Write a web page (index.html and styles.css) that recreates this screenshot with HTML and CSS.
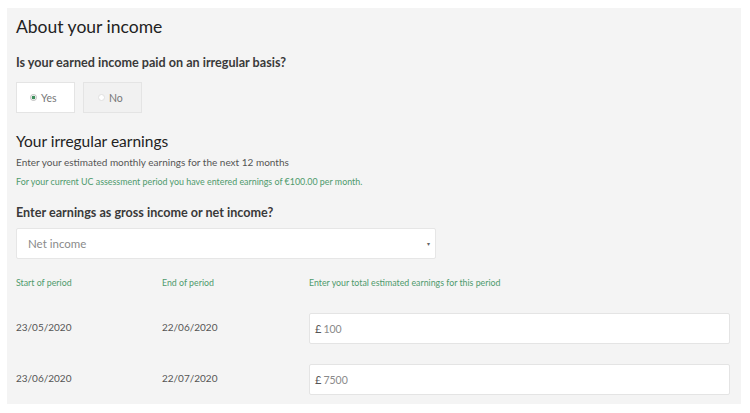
FILE: index.html
```html
<!DOCTYPE html>
<html lang="en">
<head>
    <meta charset="UTF-8">
    <meta name="viewport" content="width=device-width, initial-scale=1.0">
    <title>About your income</title>
    <link rel="stylesheet" href="styles.css">
</head>
<body>
    <div class="panel">
        <h1>About your income</h1>

        <p class="question">Is your earned income paid on an irregular basis?</p>
        <div class="choices">
            <label class="choice selected"><span class="dot on"></span>Yes</label>
            <label class="choice"><span class="dot"></span>No</label>
        </div>

        <h2>Your irregular earnings</h2>
        <p class="intro">Enter your estimated monthly earnings for the next 12 months</p>
        <p class="note">For your current UC assessment period you have entered earnings of €100.00 per month.</p>

        <p class="question q2">Enter earnings as gross income or net income?</p>
        <div class="select">
            <span>Net income</span>
            <span class="arrow">▾</span>
        </div>

        <div class="row head">
            <div>Start of period</div>
            <div>End of period</div>
            <div>Enter your total estimated earnings for this period</div>
        </div>

        <div class="row period first">
            <div class="date">23/05/2020</div>
            <div class="date">22/06/2020</div>
            <div class="amount"><span class="pound">£</span>100</div>
        </div>

        <div class="row period">
            <div class="date">23/06/2020</div>
            <div class="date">22/07/2020</div>
            <div class="amount"><span class="pound">£</span>7500</div>
        </div>
    </div>
</body>
</html>
```

FILE: styles.css
```css
body {
    margin: 0;
    padding: 8px 9px 9px 7px;
    background-color: #ffffff;
    font-family: Lato, "Open Sans", sans-serif;
    color: #333333;
}
.panel {
    background-color: #f4f4f4;
    padding: 8px 12px 9px 9px;
    height: 396px;
    box-sizing: border-box;
}
h1 {
    margin: 0;
    font-size: 17.5px;
    font-weight: 400;
    line-height: 22px;
    color: #222222;
}
h2 {
    margin: 18px 0 0 0;
    font-size: 15.5px;
    font-weight: 400;
    line-height: 20px;
    color: #222222;
}
.question {
    margin: 18px 0 0 0;
    font-size: 12.6px;
    font-weight: 700;
    line-height: 14px;
    color: #3a3a3a;
}
.q2 {
    margin-top: 19px;
}
.choices {
    display: flex;
    gap: 8px;
    margin-top: 12px;
}
.choice {
    display: flex;
    align-items: center;
    gap: 4px;
    box-sizing: border-box;
    height: 31px;
    width: 59px;
    padding-left: 14px;
    border: 1px solid #e4e4e4;
    background-color: #f1f1f1;
    font-size: 10.5px;
    color: #777777;
}
.choice.selected {
    background-color: #ffffff;
    padding-left: 13px;
}
.dot {
    width: 7px;
    height: 7px;
    border-radius: 50%;
    border: 1px solid #e0e0e0;
    background-color: #ffffff;
    box-sizing: border-box;
}
.dot.on {
    border-color: #bcbcbc;
    background: radial-gradient(circle, #3f8f5c 0 1.6px, #ffffff 2.1px);
}
.intro {
    margin: 5px 0 0 0;
    font-size: 10px;
    line-height: 12px;
    color: #555555;
}
.note {
    margin: 9px 0 0 0;
    font-size: 8.9px;
    line-height: 10px;
    color: #4e9a6c;
}
.select {
    display: flex;
    align-items: center;
    justify-content: space-between;
    box-sizing: border-box;
    width: 420px;
    height: 31px;
    margin-top: 8px;
    padding: 0 5px 0 11px;
    background-color: #ffffff;
    border: 1px solid #e6e6e6;
    border-radius: 2px;
    font-size: 11.5px;
    color: #8a8a8a;
}
.select .arrow {
    font-size: 6px;
    color: #666666;
}
.row {
    display: grid;
    grid-template-columns: 146px 147px 1fr;
    align-items: center;
}
.head {
    margin-top: 18px;
    height: 12px;
    font-size: 8.8px;
    line-height: 12px;
    color: #4e9a6c;
}
.period {
    margin-top: 20px;
}
.period.first {
    margin-top: 24px;
}
.date {
    font-size: 10px;
    color: #555555;
    padding-bottom: 3px;
}
.amount {
    display: flex;
    align-items: center;
    box-sizing: border-box;
    height: 31px;
    width: 421px;
    padding-left: 5px;
    background-color: #ffffff;
    border: 1px solid #e4e4e4;
    border-radius: 2px;
    font-size: 10.5px;
    color: #8a8a8a;
}
.pound {
    margin-right: 2px;
    color: #555555;
    font-size: 11px;
}
```
